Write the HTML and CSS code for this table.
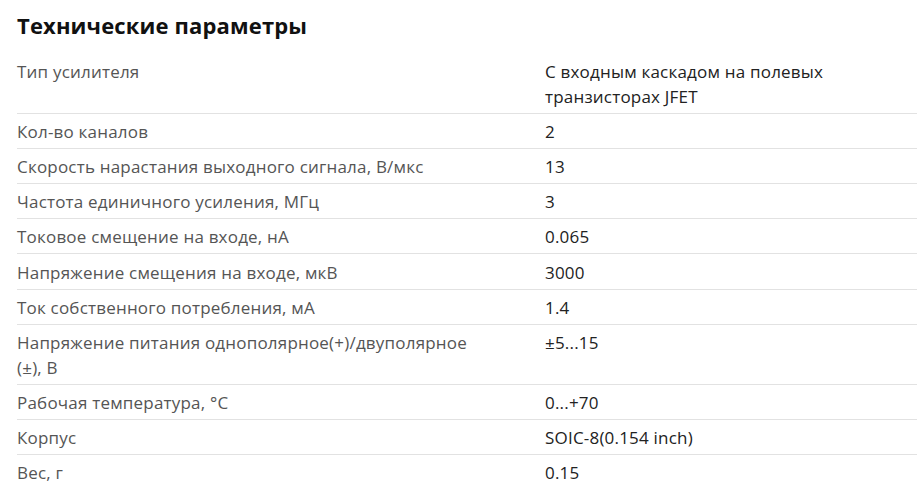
FILE: index.html
```html
<!DOCTYPE html>
<html lang="ru">
<head>
<meta charset="utf-8">
<title>Технические параметры</title>
<link rel="stylesheet" href="styles.css">
</head>
<body>
<section class="specs">
  <h2 class="specs-title">Технические параметры</h2>
  <div class="specs-table">
    <div class="spec-row"><div class="spec-name">Тип усилителя</div><div class="spec-value">С входным каскадом на полевых транзисторах JFET</div></div>
    <div class="spec-row"><div class="spec-name">Кол-во каналов</div><div class="spec-value">2</div></div>
    <div class="spec-row"><div class="spec-name">Скорость нарастания выходного сигнала, В/мкс</div><div class="spec-value">13</div></div>
    <div class="spec-row"><div class="spec-name">Частота единичного усиления, МГц</div><div class="spec-value">3</div></div>
    <div class="spec-row"><div class="spec-name">Токовое смещение на входе, нА</div><div class="spec-value">0.065</div></div>
    <div class="spec-row"><div class="spec-name">Напряжение смещения на входе, мкВ</div><div class="spec-value">3000</div></div>
    <div class="spec-row"><div class="spec-name">Ток собственного потребления, мА</div><div class="spec-value">1.4</div></div>
    <div class="spec-row"><div class="spec-name">Напряжение питания однополярное(+)/двуполярное (±), В</div><div class="spec-value">±5...15</div></div>
    <div class="spec-row"><div class="spec-name">Рабочая температура, °C</div><div class="spec-value">0...+70</div></div>
    <div class="spec-row"><div class="spec-name">Корпус</div><div class="spec-value">SOIC-8(0.154 inch)</div></div>
    <div class="spec-row"><div class="spec-name">Вес, г</div><div class="spec-value">0.15</div></div>
  </div>
</section>
</body>
</html>
```
FILE: styles.css
```css
* { box-sizing: border-box; }
html, body { margin: 0; padding: 0; background: #fff; }
body {
  font-family: "Open Sans", "Liberation Sans", sans-serif;
  font-size: 17px;
  letter-spacing: 0.2px;
  line-height: 25px;
  color: #222;
}
.specs {
  padding: 10px 0 0 17px;
}
.specs-title {
  margin: 0 0 14px;
  font-size: 22px;
  letter-spacing: 0.15px;
  line-height: 30px;
  font-weight: 700;
  color: #111;
}
.specs-table {
  display: flex;
  flex-direction: column;
}
.spec-row {
  display: grid;
  grid-template-columns: 528px 1fr;
  padding: 5.1px 0 4px;
  border-bottom: 1px solid #e2e2e2;
}
.spec-row:last-child { border-bottom: none; }
.spec-name {
  color: #555;
  padding-right: 50px;
}
.spec-value {
  color: #222;
}
```
